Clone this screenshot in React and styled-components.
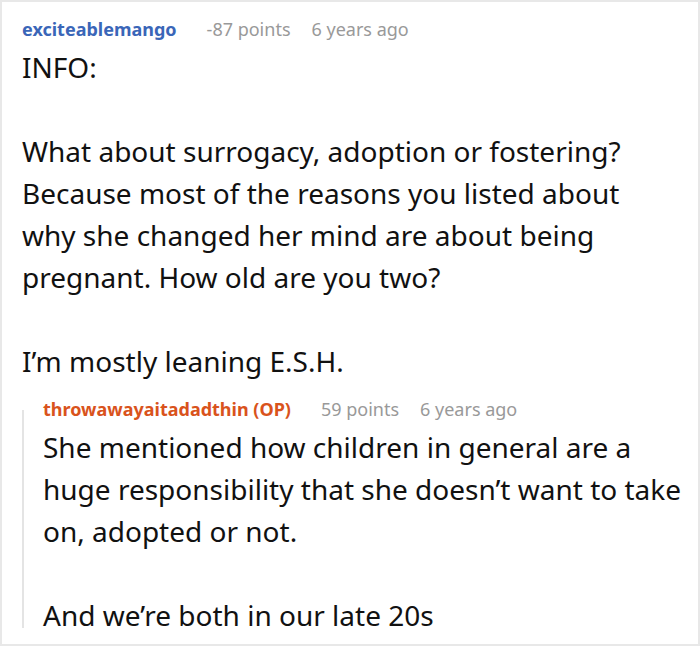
import React from "react";
import styled, { createGlobalStyle } from "styled-components";

const GlobalStyle = createGlobalStyle`
  html, body {
    margin: 0;
    padding: 0;
    background: #ffffff;
  }
  body {
    font-family: "Noto Sans", "Open Sans", sans-serif;
    color: #111111;
  }
`;

const Frame = styled.div`
  box-sizing: border-box;
  width: 700px;
  height: 646px;
  border: 2px solid #e8e8e8;
  overflow: hidden;
  padding: 15px 22px 0 20px;
`;

const Comment = styled.div`
  display: flex;
  flex-direction: column;
`;

const Meta = styled.div`
  display: flex;
  align-items: baseline;
  gap: 21px;
  font-size: 18px;
  line-height: 25px;
  white-space: nowrap;
`;

const Author = styled.span`
  font-weight: 700;
  color: ${({ $op }) => ($op ? "#d9531c" : "#3a66b8")};
  margin-right: 9px;
`;

const Stat = styled.span`
  color: #999999;
`;

const Body = styled.div`
  font-size: 28px;
  line-height: 42px;
  margin-top: 4px;

  p {
    margin: 0 0 42px;
  }
  p:last-child {
    margin-bottom: 0;
  }
`;

/* thread line starts a little below the reply header top */
const Reply = styled.div`
  margin: 15px -12px 0 0;
  padding-left: 21px;
  background: linear-gradient(#e4e4e4, #e4e4e4) no-repeat left 13px / 2px
    calc(100% - 21px);
`;

const Entry = ({ author, op, points, age, children }) => (
  <Comment>
    <Meta>
      <Author $op={op}>{author}</Author>
      <Stat>{points}</Stat>
      <Stat>{age}</Stat>
    </Meta>
    <Body>{children}</Body>
  </Comment>
);

export default function App() {
  return (
    <>
      <GlobalStyle />
      <Frame>
        <Entry author="exciteablemango" points="-87 points" age="6 years ago">
          <p>INFO:</p>
          <p>
            What about surrogacy, adoption or fostering? Because most of the
            reasons you listed about why she changed her mind are about being
            pregnant. How old are you two?
          </p>
          <p>I’m mostly leaning E.S.H.</p>
        </Entry>
        <Reply>
          <Entry
            op
            author="throwawayaitadadthin (OP)"
            points="59 points"
            age="6 years ago"
          >
            <p>
              She mentioned how children in general are a huge responsibility
              that she doesn’t want to take on, adopted or not.
            </p>
            <p>And we’re both in our late 20s</p>
          </Entry>
        </Reply>
      </Frame>
    </>
  );
}
